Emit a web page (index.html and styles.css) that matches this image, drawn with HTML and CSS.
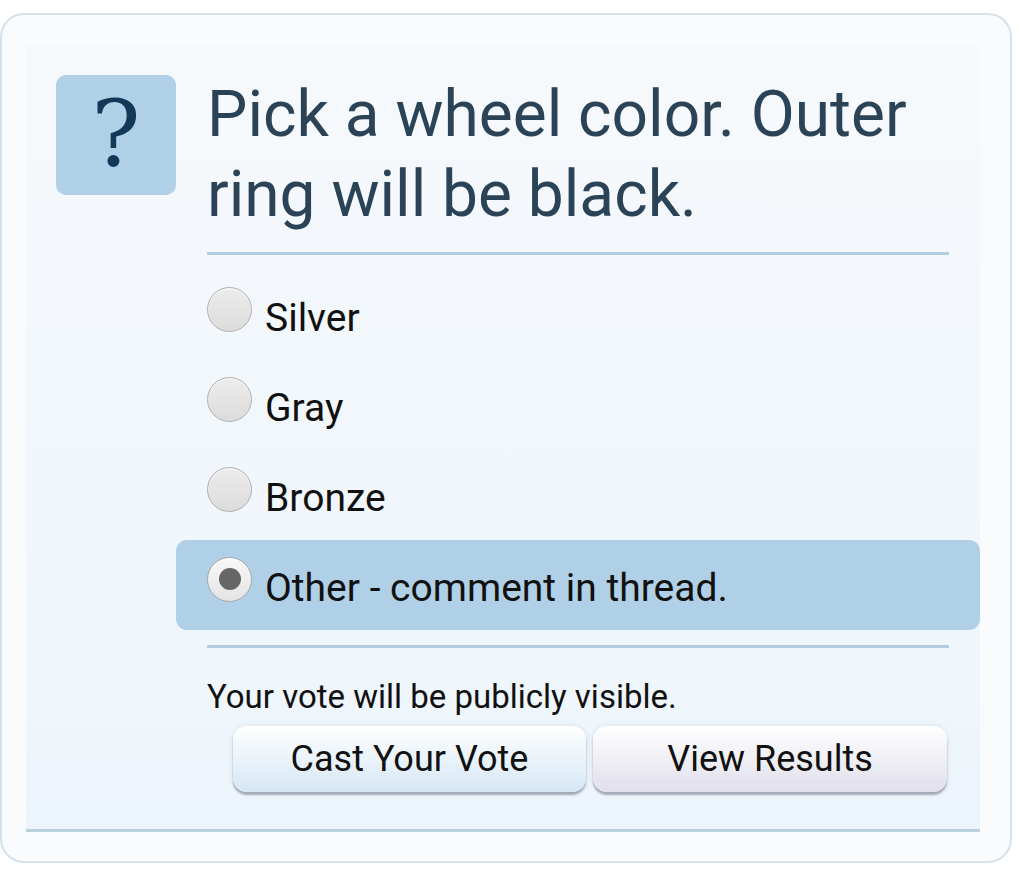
FILE: index.html
```html
<!DOCTYPE html>
<html lang="en">
<head>
<meta charset="utf-8">
<title>Poll</title>
<link rel="stylesheet" href="styles.css">
</head>
<body>
<div class="card">
  <div class="panel">
    <div class="icon">?</div>
    <div class="content">
      <h1 class="title">Pick a wheel color. Outer ring will be black.</h1>
      <div class="sep"></div>
      <div class="options">
        <label class="option"><input type="radio" name="c" class="radio"><span class="label">Silver</span></label>
        <label class="option"><input type="radio" name="c" class="radio"><span class="label">Gray</span></label>
        <label class="option"><input type="radio" name="c" class="radio"><span class="label">Bronze</span></label>
        <label class="option selected"><input type="radio" name="c" class="radio" checked><span class="label">Other - comment in thread.</span></label>
      </div>
      <div class="sep"></div>
      <p class="note">Your vote will be publicly visible.</p>
      <div class="buttons">
        <button class="btn btn-cast">Cast Your Vote</button>
        <button class="btn btn-view">View Results</button>
      </div>
    </div>
  </div>
</div>
</body>
</html>
```
FILE: styles.css
```css
* { box-sizing: border-box; }
html, body { margin: 0; padding: 0; background: #ffffff; }
body {
  padding-top: 13px;
  font-family: Roboto, "Liberation Sans", sans-serif;
  color: #111;
}
.card {
  width: 1012px;
  background: #fafbfd;
  border: 2px solid #d3e2eb;
  border-radius: 24px;
  padding: 30px 30px 29px 24px;
}
.panel {
  display: flex;
  align-items: flex-start;
  background: linear-gradient(#f6f9fc, #edf5fc);
  border-bottom: 3px solid #b8d0dc;
  padding: 30px 0 37px 30px;
}
.icon {
  flex: 0 0 120px;
  height: 120px;
  border-radius: 10px;
  background: #afd0e6;
  color: #143858;
  font-family: "DejaVu Serif", serif;
  font-size: 92px;
  line-height: 120px;
  text-align: center;
}
.content {
  flex: 1;
  display: flex;
  flex-direction: column;
}
.title {
  margin: 0 31px 17px;
  font-size: 64px;
  font-weight: 400;
  line-height: 80px;
  color: #2b4357;
}
.sep {
  height: 3px;
  margin: 0 31px;
  background: #b3cfdf;
}
.options {
  display: flex;
  flex-direction: column;
  margin: 15px 0;
}
.option {
  display: flex;
  align-items: flex-start;
  gap: 13px;
  height: 90px;
  padding: 17px 31px 0;
  border-radius: 11px;
}
.option.selected { background: #afd0e6; }
.radio {
  appearance: none;
  -webkit-appearance: none;
  margin: 0;
  flex: 0 0 45px;
  width: 45px;
  height: 45px;
  border-radius: 50%;
  border: 1px solid #b0b0b0;
  background: linear-gradient(#ececec, #dcdcdc);
  box-shadow: inset 0 1px 1px rgba(255,255,255,0.8);
  position: relative;
}
.radio:checked {
  border-color: #a8a8a8;
  background: linear-gradient(#f8f8f8, #e4e4e4);
}
.radio:checked::after {
  content: "";
  position: absolute;
  left: 11px;
  top: 10px;
  width: 22px;
  height: 22px;
  border-radius: 50%;
  background: #666;
}
.label {
  margin-top: 9px;
  font-size: 39px;
  line-height: 45px;
  color: #111;
}
.note {
  margin: 31px 31px 0;
  font-size: 33px;
  line-height: 36px;
  color: #111;
}
.buttons {
  display: flex;
  gap: 7px;
  margin: 11px 0 0 57px;
}
.btn {
  width: 353px;
  height: 66px;
  border: none;
  border-radius: 14px;
  font-family: Roboto, "Liberation Sans", sans-serif;
  font-size: 36px;
  color: #111;
  padding: 0;
  box-shadow: 0 3px 2px rgba(110,112,130,0.55), 0 0 6px rgba(0,0,0,0.08);
}
.btn-cast { background: linear-gradient(#ffffff, #d5e7f5); }
.btn-view { width: 354px; background: linear-gradient(#ffffff, #e0dfeb); }
```
